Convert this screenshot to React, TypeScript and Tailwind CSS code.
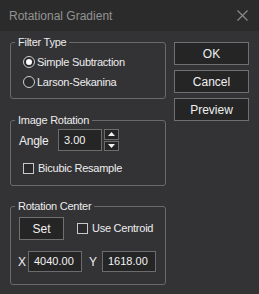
import React from "react";

const FONT = "font-['Liberation_Sans',Arial,sans-serif]";

function Group({
  title,
  className,
  children,
}: {
  title: string;
  className?: string;
  children: React.ReactNode;
}) {
  return (
    <div
      className={`relative border border-[#6a6a6d] rounded-[3px] px-[8px] ${className ?? ""}`}
    >
      <span className="absolute left-[4px] top-[-7px] px-[3px] bg-[#333336] text-[11px] leading-[12px] tracking-[-0.25px] text-[#ececec]">
        {title}
      </span>
      {children}
    </div>
  );
}

function Radio({ checked, label }: { checked?: boolean; label: string }) {
  return (
    <div className="h-[20px] flex items-center gap-[2px] pl-[4px]">
      <span className="w-[12px] h-[12px] rounded-full border border-[#cfcfcf] bg-[#2a2a2c] flex items-center justify-center">
        {checked && <span className="w-[6px] h-[6px] rounded-full bg-white" />}
      </span>
      <span className="tracking-[-0.25px]">{label}</span>
    </div>
  );
}

function Check({ label }: { label: string }) {
  return (
    <div className="h-[20px] flex items-center gap-[4px]">
      <span className="w-[11px] h-[11px] border border-[#c8c8c8] bg-[#2a2a2c]" />
      <span className="tracking-[-0.25px]">{label}</span>
    </div>
  );
}

function Field({ value, w }: { value: string; w: string }) {
  return (
    <div
      className={`${w} h-full border border-[#6c6c6f] bg-[#252526] flex items-center pl-[5px] text-[#f2f2f2]`}
    >
      {value}
    </div>
  );
}

function Btn({ label, className }: { label: string; className?: string }) {
  return (
    <div
      className={`border border-[#707073] bg-[#252526] flex items-center justify-center text-[#f0f0f0] ${className ?? ""}`}
    >
      {label}
    </div>
  );
}

export default function App() {
  return (
    <div
      className={`w-[259px] h-[294px] bg-[#333336] text-[#eeeeee] text-[11px] ${FONT} flex flex-col overflow-hidden`}
    >
      {/* Title bar */}
      <div className="h-[31px] bg-[#2b2b2b] flex items-center justify-between pl-[9px] pr-[11px] shrink-0">
        <span className="text-[12px] text-[#939393]">Rotational Gradient</span>
        <svg width="11" height="11" viewBox="0 0 11 11">
          <path
            d="M0.5 0.5 L10.5 10.5 M10.5 0.5 L0.5 10.5"
            stroke="#8a8a8a"
            strokeWidth="1.2"
          />
        </svg>
      </div>

      <div className="flex pl-[10px] pt-[11px]">
        {/* Left column */}
        <div className="w-[156px] flex flex-col">
          <Group title="Filter Type" className="pt-[9px] pb-[6px]">
            <Radio checked label="Simple Subtraction" />
            <Radio label="Larson-Sekanina" />
          </Group>

          <Group title="Image Rotation" className="mt-[21px] pt-[8px] pb-[7px]">
            <div className="h-[22px] flex items-center">
              <span className="w-[39px] text-[12px] tracking-[-0.25px] pt-[1px]">
                Angle
              </span>
              <Field value="3.00" w="w-[44px]" />
              <div className="ml-[2px] w-[15px] h-full flex flex-col gap-[1px]">
                <div className="flex-1 border border-[#6c6c6f] bg-[#252526] flex items-center justify-center">
                  <svg width="7" height="4" viewBox="0 0 7 4">
                    <path d="M3.5 0 L7 4 L0 4 Z" fill="#f0f0f0" />
                  </svg>
                </div>
                <div className="flex-1 border border-[#6c6c6f] bg-[#252526] flex items-center justify-center">
                  <svg width="7" height="4" viewBox="0 0 7 4">
                    <path d="M0 0 L7 0 L3.5 4 Z" fill="#f0f0f0" />
                  </svg>
                </div>
              </div>
            </div>
            <div className="mt-[7px] pl-[4px]">
              <Check label="Bicubic Resample" />
            </div>
          </Group>

          <Group title="Rotation Center" className="mt-[20px] pt-[10px] pb-[12px]">
            <div className="h-[23px] flex items-center">
              <Btn label="Set" className="w-[45px] h-full text-[12px]" />
              <div className="ml-[13px]">
                <Check label="Use Centroid" />
              </div>
            </div>
            <div className="mt-[11px] h-[21px] flex items-center">
              <span className="w-[10px] text-[12px] ml-[-1px]">X</span>
              <Field value="4040.00" w="w-[54px]" />
              <span className="w-[13px] ml-[7px] text-[12px]">Y</span>
              <Field value="1618.00" w="w-[54px]" />
            </div>
          </Group>
        </div>

        {/* Right column */}
        <div className="ml-[8px] w-[75px] flex flex-col gap-[5px] text-[12px]">
          <Btn label="OK" className="h-[23px]" />
          <Btn label="Cancel" className="h-[23px]" />
          <Btn label="Preview" className="h-[23px]" />
        </div>
      </div>
    </div>
  );
}
